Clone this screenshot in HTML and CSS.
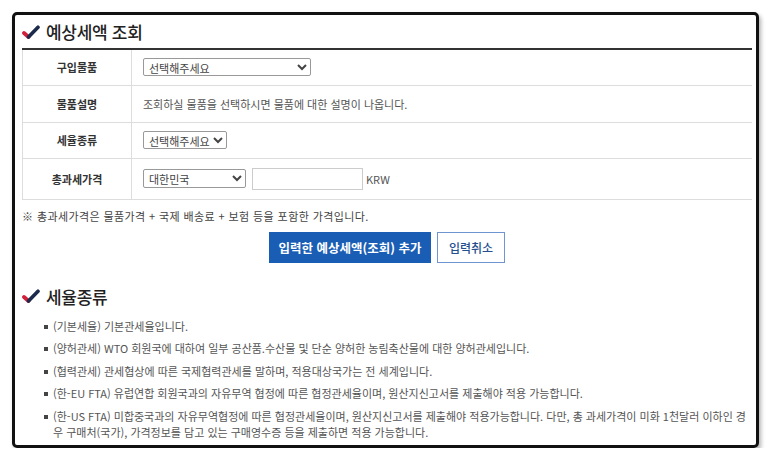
FILE: index.html
```html
<!DOCTYPE html>
<html lang="ko">
<head>
    <meta charset="UTF-8">
    <title>예상세액 조회</title>
    <link rel="stylesheet" href="styles.css">
</head>
<body>
    <div class="frame">
        <h2 class="title">
            <svg class="check" viewBox="0 0 18 15" width="18" height="15">
                <path d="M2 8 L6.5 12" stroke="#d3213c" stroke-width="3.8" stroke-linecap="round" fill="none"/>
                <path d="M6.5 12 L16 2.2" stroke="#1c2b4b" stroke-width="3.6" stroke-linecap="round" fill="none"/>
            </svg>
            예상세액 조회
        </h2>

        <table class="form-table">
            <tr class="r1">
                <th>구입물품</th>
                <td>
                    <select class="sel-item">
                        <option>선택해주세요</option>
                    </select>
                </td>
            </tr>
            <tr class="r2">
                <th>물품설명</th>
                <td class="desc">조회하실 물품을 선택하시면 물품에 대한 설명이 나옵니다.</td>
            </tr>
            <tr class="r3">
                <th>세율종류</th>
                <td>
                    <select class="sel-rate">
                        <option>선택해주세요</option>
                    </select>
                </td>
            </tr>
            <tr class="r4">
                <th>총과세가격</th>
                <td>
                    <div class="price">
                        <select class="sel-country">
                            <option>대한민국</option>
                        </select>
                        <input type="text" class="amount">
                        <span class="unit">KRW</span>
                    </div>
                </td>
            </tr>
        </table>

        <p class="note">※ 총과세가격은 물품가격 + 국제 배송료 + 보험 등을 포함한 가격입니다.</p>

        <div class="buttons">
            <button class="btn-primary">입력한 예상세액(조회) 추가</button>
            <button class="btn-line">입력취소</button>
        </div>

        <h2 class="title title-second">
            <svg class="check" viewBox="0 0 18 15" width="18" height="15">
                <path d="M2 8 L6.5 12" stroke="#d3213c" stroke-width="3.8" stroke-linecap="round" fill="none"/>
                <path d="M6.5 12 L16 2.2" stroke="#1c2b4b" stroke-width="3.6" stroke-linecap="round" fill="none"/>
            </svg>
            세율종류
        </h2>

        <ul class="rate-list">
            <li>(기본세율) 기본관세율입니다.</li>
            <li>(양허관세) WTO 회원국에 대하여 일부 공산품.수산물 및 단순 양허한 농림축산물에 대한 양허관세입니다.</li>
            <li>(협력관세) 관세협상에 따른 국제협력관세를 말하며, 적용대상국가는 전 세계입니다.</li>
            <li>(한-EU FTA) 유럽연합 회원국과의 자유무역 협정에 따른 협정관세율이며, 원산지신고서를 제출해야 적용 가능합니다.</li>
            <li>(한-US FTA) 미합중국과의 자유무역협정에 따른 협정관세율이며, 원산지신고서를 제출해야 적용가능합니다. 다만, 총 과세가격이 미화 1천달러 이하인 경우 구매처(국가), 가격정보를 담고 있는 구매영수증 등을 제출하면 적용 가능합니다.</li>
        </ul>
    </div>
</body>
</html>
```

FILE: styles.css
```css
body {
    margin: 0;
    background: #fff;
    font-family: "Noto Sans CJK KR", "Noto Sans", sans-serif;
    color: #333;
}
.frame {
    margin: 12px 0 0 12px;
    width: 730px;
    height: 430px;
    border: 3px solid #111;
    border-radius: 5px;
    box-shadow: 2px 3px 4px rgba(0, 0, 0, 0.3);
    padding: 0 4px 0 7px;
    overflow: hidden;
}
.title {
    display: flex;
    align-items: center;
    gap: 6px;
    margin: 0;
    height: 33px;
    font-size: 17px;
    font-weight: 500;
    color: #222;
    letter-spacing: -0.3px;
}
.check {
    flex: none;
    margin-top: 1px;
}
.form-table {
    width: 100%;
    border-collapse: collapse;
    border-top: 2px solid #333;
    border-left: 1px solid #ddd;
    font-size: 11px;
}
.form-table th {
    width: 108px;
    font-weight: bold;
    color: #333;
    border-right: 1px solid #ddd;
    border-bottom: 1px solid #ddd;
    text-align: center;
    padding: 0;
}
.form-table td {
    padding: 0 0 0 11px;
    border-bottom: 1px solid #ddd;
    color: #555;
}
.r1 { height: 36px; }
.r2 { height: 37px; }
.r3 { height: 36px; }
.r4 { height: 41px; }
select {
    font-family: inherit;
    font-size: 11px;
    height: 18px;
    padding: 0 0 0 1px;
    border: 1px solid #999;
    border-radius: 2px;
    background: #fff;
    color: #444;
    display: block;
}
.sel-item { width: 168px; }
.sel-rate { width: 84px; }
.sel-country { width: 103px; height: 19px; }
.price {
    display: flex;
    align-items: center;
}
.amount {
    width: 111px;
    height: 22px;
    box-sizing: border-box;
    border: 1px solid #ccc;
    margin-left: 6px;
}
.unit {
    margin-left: 3px;
    color: #555;
}
.note {
    margin: 8px 0 0;
    font-size: 11px;
    color: #444;
    letter-spacing: 0.4px;
}
.buttons {
    display: flex;
    justify-content: center;
    gap: 6px;
    margin-top: 8px;
}
.buttons button {
    font-family: inherit;
    height: 31px;
    padding: 0;
    white-space: nowrap;
    cursor: pointer;
}
.btn-primary {
    background: #1a5db5;
    color: #fff;
    border: 1px solid #1a5db5;
    font-size: 12.5px;
    font-weight: bold;
    width: 162px;
}
.btn-line {
    background: #fff;
    color: #24508f;
    border: 1px solid #6e95cf;
    font-size: 12px;
    font-weight: 500;
    width: 68px;
}
.title-second {
    margin-top: 17px;
}
.rate-list {
    list-style: none;
    margin: 5px 0 0;
    padding: 0 0 0 22px;
    font-size: 11px;
    color: #555;
    line-height: 16px;
}
.rate-list li {
    position: relative;
    padding-left: 9px;
    margin-bottom: 6.5px;
}
.rate-list li::before {
    content: "";
    position: absolute;
    left: 0;
    top: 7px;
    width: 4px;
    height: 4px;
    background: #444;
}
```
